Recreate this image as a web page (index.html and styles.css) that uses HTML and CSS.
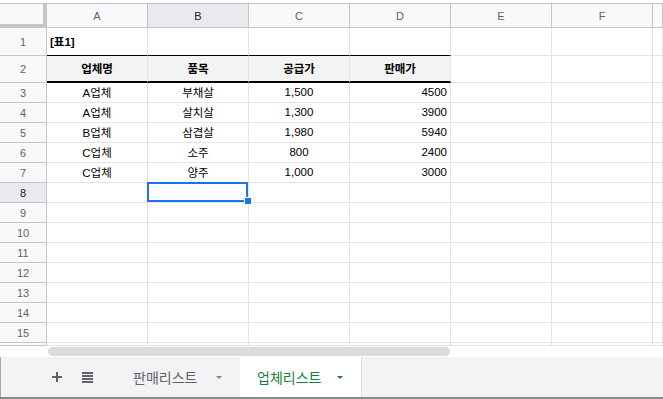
FILE: index.html
```html
<!DOCTYPE html>
<html lang="ko">
<head>
<meta charset="utf-8">
<title>업체리스트</title>
<link rel="stylesheet" href="styles.css">
</head>
<body>
<div class="page">
  <div class="topstrip"></div>
  <div class="grid">
    <div class="corner"></div>
    <div class="ch">A</div><div class="ch cur">B</div><div class="ch">C</div><div class="ch">D</div><div class="ch">E</div><div class="ch">F</div><div class="ch"></div>

    <div class="rh">1</div><div class="c title tb">[표1]</div><div class="c tb"></div><div class="c tb"></div><div class="c tb"></div><div class="c"></div><div class="c"></div><div class="c"></div>

    <div class="rh">2</div><div class="c hd">업체명</div><div class="c hd">품목</div><div class="c hd">공급가</div><div class="c hd">판매가</div><div class="c"></div><div class="c"></div><div class="c"></div>

    <div class="rh">3</div><div class="c ctr">A업체</div><div class="c ctr">부채살</div><div class="c ctr">1,500</div><div class="c rt">4500</div><div class="c"></div><div class="c"></div><div class="c"></div>
    <div class="rh">4</div><div class="c ctr">A업체</div><div class="c ctr">살치살</div><div class="c ctr">1,300</div><div class="c rt">3900</div><div class="c"></div><div class="c"></div><div class="c"></div>
    <div class="rh">5</div><div class="c ctr">B업체</div><div class="c ctr">삼겹살</div><div class="c ctr">1,980</div><div class="c rt">5940</div><div class="c"></div><div class="c"></div><div class="c"></div>
    <div class="rh">6</div><div class="c ctr">C업체</div><div class="c ctr">소주</div><div class="c ctr">800</div><div class="c rt">2400</div><div class="c"></div><div class="c"></div><div class="c"></div>
    <div class="rh">7</div><div class="c ctr">C업체</div><div class="c ctr">양주</div><div class="c ctr">1,000</div><div class="c rt">3000</div><div class="c"></div><div class="c"></div><div class="c"></div>
    <div class="rh cur">8</div><div class="c"></div><div class="c selcell"><span class="selbox"></span><span class="handle"></span></div><div class="c"></div><div class="c"></div><div class="c"></div><div class="c"></div><div class="c"></div>
    <div class="rh">9</div><div class="c"></div><div class="c"></div><div class="c"></div><div class="c"></div><div class="c"></div><div class="c"></div><div class="c"></div>
    <div class="rh">10</div><div class="c"></div><div class="c"></div><div class="c"></div><div class="c"></div><div class="c"></div><div class="c"></div><div class="c"></div>
    <div class="rh">11</div><div class="c"></div><div class="c"></div><div class="c"></div><div class="c"></div><div class="c"></div><div class="c"></div><div class="c"></div>
    <div class="rh">12</div><div class="c"></div><div class="c"></div><div class="c"></div><div class="c"></div><div class="c"></div><div class="c"></div><div class="c"></div>
    <div class="rh">13</div><div class="c"></div><div class="c"></div><div class="c"></div><div class="c"></div><div class="c"></div><div class="c"></div><div class="c"></div>
    <div class="rh">14</div><div class="c"></div><div class="c"></div><div class="c"></div><div class="c"></div><div class="c"></div><div class="c"></div><div class="c"></div>
    <div class="rh">15</div><div class="c"></div><div class="c"></div><div class="c"></div><div class="c"></div><div class="c"></div><div class="c"></div><div class="c"></div>
    <div class="rh"></div><div class="c"></div><div class="c"></div><div class="c"></div><div class="c"></div><div class="c"></div><div class="c"></div><div class="c"></div>
  </div>
  <div class="hscroll"><div class="thumb"></div></div>
  <div class="tabbar">
    <div class="icon add">
      <svg width="10" height="10" viewBox="0 0 10 10"><rect x="4" y="0" width="2" height="10" fill="#5f6368"/><rect x="0" y="4" width="10" height="2" fill="#5f6368"/></svg>
    </div>
    <div class="icon list">
      <svg width="11" height="11" viewBox="0 0 11 11"><rect x="0" y="0" width="11" height="2" fill="#5f6368"/><rect x="0" y="3" width="11" height="2" fill="#5f6368"/><rect x="0" y="6" width="11" height="2" fill="#5f6368"/><rect x="0" y="9" width="11" height="2" fill="#5f6368"/></svg>
    </div>
    <div class="tab">판매리스트<span class="caret"></span></div>
    <div class="tab active">업체리스트<span class="caret"></span></div>
  </div>
</div>
</body>
</html>
```
FILE: styles.css
```css
* { box-sizing: border-box; margin: 0; padding: 0; }
html, body { width: 663px; height: 399px; overflow: hidden; background: #fff; }
body { font-family: "Liberation Sans", "Noto Sans CJK KR", sans-serif; color: #000; }

.page {
  display: flex;
  flex-direction: column;
  height: 399px;
  border-bottom: 2px solid #8a8a8a;
}
.topstrip { height: 3px; flex: none; }

.grid {
  flex: none;
  display: grid;
  grid-template-columns: 47px repeat(6, 101px) 10px;
  grid-template-rows: 25px 28px 27px repeat(13, 20px) 3px;
}
.grid > div {
  display: flex;
  align-items: center;
  white-space: nowrap;
  overflow: hidden;
  border-right: 1px solid #e2e3e3;
  border-bottom: 1px solid #e2e3e3;
}

.corner {
  background: #f8f9fa;
  border-top: 1px solid #c4c7c5;
}
.grid > .corner {
  border-right: 4px solid #c4c7c5;
  border-bottom: 4px solid #c4c7c5;
}
.grid > .ch {
  background: #f8f9fa;
  border-top: 1px solid #c4c7c5;
  border-right: 1px solid #c4c7c5;
  border-bottom: 1px solid #c4c7c5;
  justify-content: center;
  font-size: 11px;
  color: #5f6368;
}
.grid > .rh {
  background: #f8f9fa;
  border-right: 1px solid #c4c7c5;
  border-bottom: 1px solid #c4c7c5;
  justify-content: center;
  font-size: 11px;
  color: #5f6368;
}
.grid > .cur { background: #e8eaed; color: #202124; }

.c { font-size: 11.5px; padding: 0 3px 1px; }
.title { font-weight: bold; }
.grid > .tb { border-bottom: 1px solid #000; }
.grid > .hd {
  background: #f3f3f3;
  font-weight: bold;
  justify-content: center;
  border-bottom: 2px solid #000;
}
.ctr { justify-content: center; }
.rt { justify-content: flex-end; }

.grid > .selcell { position: relative; overflow: visible; z-index: 2; }
.selbox {
  position: absolute;
  left: -1px;
  top: -1px;
  width: 101px;
  height: 20px;
  border: 2px solid #1a73e8;
}
.handle {
  position: absolute;
  left: 96px;
  top: 14px;
  width: 8px;
  height: 8px;
  background: #1a73e8;
  border: 1px solid #fff;
}

.hscroll {
  flex: none;
  height: 11px;
  padding-left: 48px;
  display: flex;
  align-items: flex-start;
}
.thumb {
  width: 402px;
  height: 9px;
  margin-top: 1px;
  background: #dadce0;
  border-radius: 5px;
}

.tabbar {
  flex: 1;
  display: flex;
  align-items: stretch;
  background: #f1f3f4;
  padding-left: 52px;
  border-left: 1px solid #a8a8a8;
}
.icon { display: flex; align-items: center; }
.icon svg { display: block; }
.add { width: 10px; margin-right: 20px; margin-left: -1px; }
.list { width: 11px; margin-right: 25px; }
.tab {
  width: 122px;
  display: flex;
  align-items: center;
  padding-left: 15px;
  padding-right: 18px;
  font-family: "Noto Sans CJK KR", "Liberation Sans", sans-serif;
  font-size: 14px;
  color: #5f6368;
}
.tab.active {
  background: #fff;
  color: #188038;
  padding-left: 17px;
  border-right: 1px solid #dadce0;
}
.caret {
  margin-left: auto;
  width: 0;
  height: 0;
  border-left: 3px solid transparent;
  border-right: 3px solid transparent;
  border-top: 3px solid #80868b;
}
.tab.active .caret { border-top-color: #188038; }
```
